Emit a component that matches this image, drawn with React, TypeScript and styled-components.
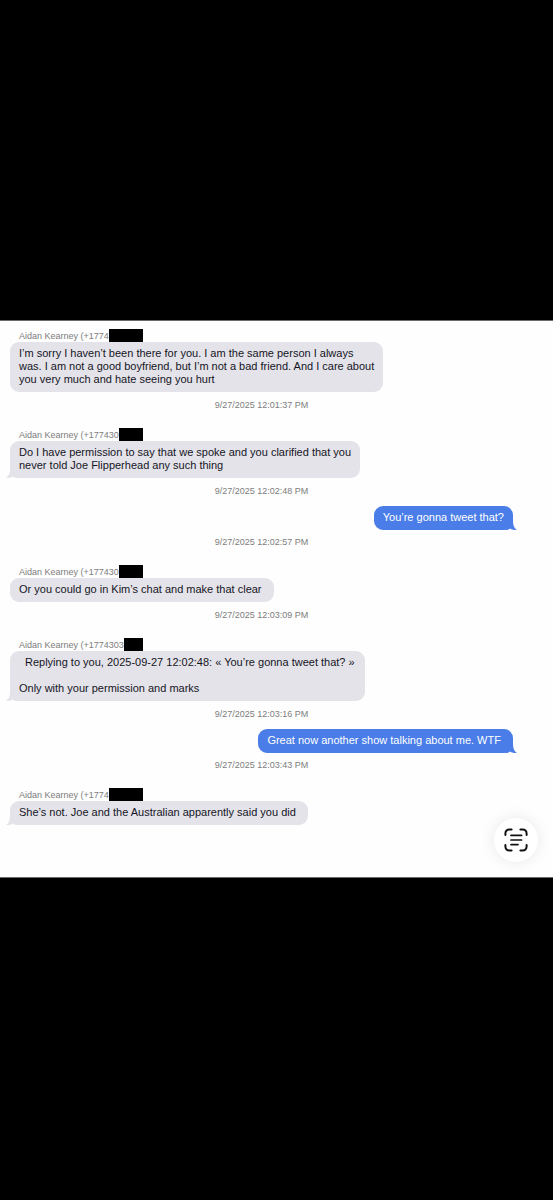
import React from "react";
import styled, { createGlobalStyle, css } from "styled-components";

const GlobalStyle = createGlobalStyle`
  *, *::before, *::after { box-sizing: border-box; }
  body {
    margin: 0;
    background: #000;
    font-family: "Liberation Sans", Arial, sans-serif;
  }
`;

const Page = styled.div`
  display: flex;
  flex-direction: column;
  justify-content: center;
  min-height: 100vh;
  padding-bottom: 3px;
  background: #000;
`;

const Sheet = styled.main`
  position: relative;
  padding: 8px 40px 52px 10px;
  background: #fefefe;
  border: 0 solid #6b6b6b;
  border-width: 1px 0;
`;

const Thread = styled.ol`
  display: flex;
  flex-direction: column;
  gap: 9px;
  margin: 0;
  padding: 0;
  list-style: none;
`;

const Message = styled.li<{ $sent: boolean }>`
  display: flex;
  flex-direction: column;
  align-items: ${(p) => (p.$sent ? "flex-end" : "flex-start")};
  padding-top: ${(p) => (p.$sent ? 0 : 8)}px;

  &:first-child {
    padding-top: 0;
  }
`;

const Sender = styled.div`
  display: flex;
  width: 133px;
  height: 13px;
  padding-left: 9px;
  font-size: 9px;
  line-height: 14px;
  color: #7d7d7d;
  white-space: nowrap;
`;

const Redaction = styled.span`
  flex: 1;
  background: #000;
`;

const Bubble = styled.div<{ $sent: boolean }>`
  position: relative;
  padding: 5px 9px 6px;
  border-radius: 9px;
  font-size: 11px;
  line-height: 13px;
  white-space: pre-line;
  ${(p) =>
    p.$sent
      ? css`
          background: #4a7de8;
          color: #fff;
        `
      : css`
          background: #e4e3e9;
          color: #15151f;
        `}
`;

const TailShape = styled.svg<{ $sent: boolean }>`
  position: absolute;
  bottom: 0;
  width: 12px;
  height: 12px;
  ${(p) =>
    p.$sent
      ? css`
          right: -4px;
          color: #4a7de8;
        `
      : css`
          left: -4px;
          color: #e4e3e9;
          transform: scaleX(-1);
        `}
`;

const Quote = styled.div`
  padding: 0 1px 13px 6px;
`;

const Time = styled.time<{ $sent: boolean }>`
  align-self: center;
  margin-top: ${(p) => (p.$sent ? 7 : 8)}px;
  font-size: 9px;
  line-height: 11px;
  color: #7d7d7d;
`;

const ScanButton = styled.button`
  position: absolute;
  right: 15px;
  bottom: 15px;
  display: grid;
  place-items: center;
  width: 44px;
  height: 44px;
  padding: 0;
  border: 0;
  border-radius: 50%;
  background: #fff;
  color: #111;
  box-shadow: 0 0 16px rgba(0, 0, 0, 0.09);
  cursor: pointer;
`;

const Tail = ({ sent }: { sent: boolean }) => (
  <TailShape $sent={sent} viewBox="0 0 12 12" aria-hidden="true">
    <path d="M0 12 L8 2 C8 7 9 10 12 12 C9 12 6.5 11.5 5 10.5 C4 11.5 2 12 0 12Z" fill="currentColor" />
  </TailShape>
);

const ScanTextIcon = () => (
  <svg width="24" height="24" viewBox="0 0 24 24" fill="none" stroke="currentColor" strokeWidth="2" strokeLinecap="round" aria-hidden="true">
    <path d="M1.4 7V5.4a4 4 0 0 1 4-4H7.6M16.4 1.4h2.2a4 4 0 0 1 4 4V7M22.6 17v1.6a4 4 0 0 1-4 4h-2.2M7.6 22.6H5.4a4 4 0 0 1-4-4V17" />
    <path d="M7 7.4h10.6M7 12h10.6M7 16.6h7" strokeWidth="1.7" />
  </svg>
);

type Entry = {
  sent?: boolean;
  tail?: boolean;
  sender?: string;
  quote?: string;
  text: string;
  time?: string;
};

const entries: Entry[] = [
  {
    sender: "Aidan Kearney (+1774",
    text: "I’m sorry I haven’t been there for you. I am the same person I always\nwas. I am not a good boyfriend, but I’m not a bad friend. And I care about\nyou very much and hate seeing you hurt",
    time: "9/27/2025 12:01:37 PM",
  },
  {
    tail: true,
    sender: "Aidan Kearney (+177430",
    text: "Do I have permission to say that we spoke and you clarified that you\nnever told Joe Flipperhead any such thing",
    time: "9/27/2025 12:02:48 PM",
  },
  { sent: true, tail: true, text: "You’re gonna tweet that?", time: "9/27/2025 12:02:57 PM" },
  {
    sender: "Aidan Kearney (+177430",
    text: "Or you could go in Kim’s chat and make that clear\u00a0",
    time: "9/27/2025 12:03:09 PM",
  },
  {
    tail: true,
    sender: "Aidan Kearney (+1774303",
    quote: "Replying to you, 2025-09-27 12:02:48: « You’re gonna tweet that? »",
    text: "Only with your permission and marks",
    time: "9/27/2025 12:03:16 PM",
  },
  { sent: true, tail: true, text: "Great now another show talking about me. WTF\u00a0", time: "9/27/2025 12:03:43 PM" },
  {
    tail: true,
    sender: "Aidan Kearney (+1774",
    text: "She’s not. Joe and the Australian apparently said you did\u00a0",
  },
];

export default function App() {
  return (
    <>
      <GlobalStyle />
      <Page>
        <Sheet>
          <Thread>
            {entries.map((entry, index) => {
              const sent = Boolean(entry.sent);
              return (
                <Message key={index} $sent={sent}>
                  {entry.sender && (
                    <Sender>
                      <span>{entry.sender}</span>
                      <Redaction />
                    </Sender>
                  )}
                  <Bubble $sent={sent}>
                    {entry.tail && <Tail sent={sent} />}
                    {entry.quote && <Quote>{entry.quote}</Quote>}
                    {entry.text}
                  </Bubble>
                  {entry.time && <Time $sent={sent}>{entry.time}</Time>}
                </Message>
              );
            })}
          </Thread>
          <ScanButton type="button" aria-label="Scan text">
            <ScanTextIcon />
          </ScanButton>
        </Sheet>
      </Page>
    </>
  );
}
